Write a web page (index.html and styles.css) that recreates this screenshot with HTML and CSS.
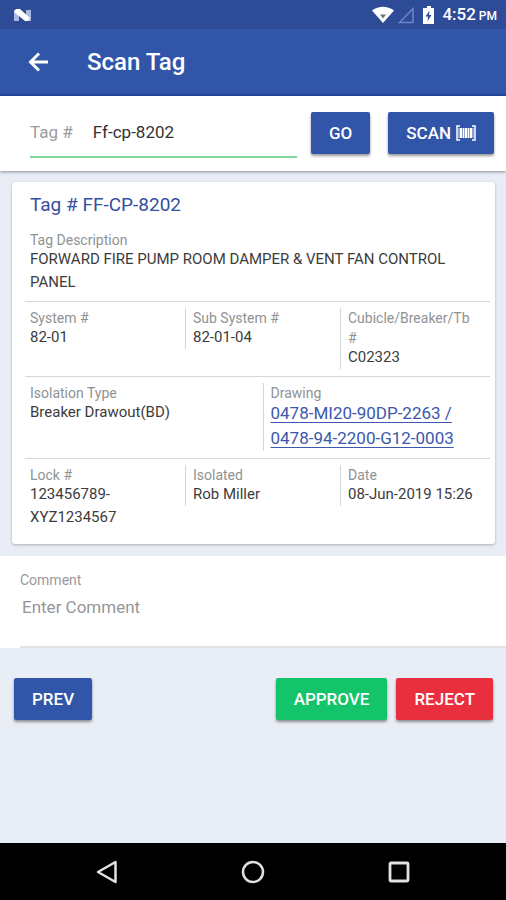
FILE: index.html
```html
<!DOCTYPE html>
<html lang="en">
<head>
<meta charset="utf-8">
<meta name="viewport" content="width=device-width, initial-scale=1">
<title>Scan Tag</title>
<link rel="stylesheet" href="styles.css">
</head>
<body>
<div class="status">
  <svg class="logo" width="20" height="16" viewBox="0 0 20 16" aria-hidden="true">
    <path d="M1 3h5v11H1zM13 3h5v11h-5z" fill="#a9b9e2"/>
    <path d="M3 2h4l10 9-2 3h-3L1 5z" fill="#fff"/>
  </svg>
  <div class="status-right">
    <svg width="62" height="20" viewBox="0 0 62 20" aria-hidden="true">
      <path d="M0 5.500Q11 -2 22 5.500L11 18Z" fill="#fff"/>
      <path d="M8 9.500h6l-3 4z" fill="#6c6f7c"/>
      <path d="M27.500 17.500h13.500v-14z" fill="none" stroke="#6c86c8" stroke-width="1.500"/>
      <path d="M55 1h4v2h3v16H51V3h4z" fill="#fff"/>
      <path d="M57.500 5.500l-4 6h2.500l-.5 4.500 4-6H57z" fill="#2d4b96"/>
    </svg>
    <span class="clock">4:52<small>PM</small></span>
  </div>
</div>
<header class="appbar">
  <button class="back" type="button" aria-label="Back">
    <svg width="22" height="20" viewBox="0 0 22 20" aria-hidden="true"><path d="M20 10H2.500M11 1.500L2.500 10l8.500 8.500" fill="none" stroke="#fff" stroke-width="3"/></svg>
  </button>
  <h1>Scan Tag</h1>
</header>
<form class="search">
  <div class="field">
    <label for="tag">Tag #</label>
    <input id="tag" type="text" value="Ff-cp-8202">
  </div>
  <button class="btn go" type="button">GO</button>
  <button class="btn" type="button">SCAN
    <svg width="20" height="16" viewBox="0 0 20 16" aria-hidden="true">
      <path d="M4 1H1v14h3M16 1h3v14h-3" fill="none" stroke="#fff" stroke-width="1.500"/>
      <path d="M4 3h2v10H4zM7 3h1v10H7zM9 3h2v10H9zM12 3h1v10h-1zM14 3h2v10h-2z" fill="#fff"/>
      <path d="M2 3h16v10H2z" fill="#fff" opacity=".45"/>
    </svg>
  </button>
</form>
<main>
  <section class="card">
    <h2>Tag # FF-CP-8202</h2>
    <div class="row first">
      <div class="cell"><div class="label">Tag Description</div><div class="value">FORWARD FIRE PUMP ROOM DAMPER &amp; VENT FAN CONTROL PANEL</div></div>
    </div>
    <div class="row">
      <div class="cells thirds">
        <div class="cell"><div class="label">System #</div><div class="value">82-01</div></div>
        <div class="cell"><div class="label">Sub System #</div><div class="value">82-01-04</div></div>
        <div class="cell"><div class="label">Cubicle/Breaker/Tb #</div><div class="value">C02323</div></div>
      </div>
    </div>
    <div class="row">
      <div class="cells halves">
        <div class="cell"><div class="label">Isolation Type</div><div class="value">Breaker Drawout(BD)</div></div>
        <div class="cell"><div class="label">Drawing</div><div class="value links"><a href="#">0478-MI20-90DP-2263 /</a><a href="#">0478-94-2200-G12-0003</a></div></div>
      </div>
    </div>
    <div class="row">
      <div class="cells thirds">
        <div class="cell"><div class="label">Lock #</div><div class="value">123456789-XYZ1234567</div></div>
        <div class="cell"><div class="label">Isolated</div><div class="value">Rob Miller</div></div>
        <div class="cell"><div class="label">Date</div><div class="value">08-Jun-2019 15:26</div></div>
      </div>
    </div>
  </section>
  <section class="comment">
    <label for="comment">Comment</label>
    <textarea id="comment" rows="2" placeholder="Enter Comment"></textarea>
  </section>
  <div class="actions">
    <button class="btn prev" type="button">PREV</button>
    <button class="btn approve" type="button">APPROVE</button>
    <button class="btn reject" type="button">REJECT</button>
  </div>
</main>
<nav class="sysnav">
  <button type="button" aria-label="Back"><svg width="24" height="24" viewBox="0 0 24 24"><path d="M20.500 2v20L3 12z" fill="none" stroke="#e2e2e2" stroke-width="2.500" stroke-linejoin="round"/></svg></button>
  <button type="button" aria-label="Home"><svg width="24" height="24" viewBox="0 0 24 24"><circle cx="12" cy="12" r="10" fill="none" stroke="#e2e2e2" stroke-width="2.500"/></svg></button>
  <button type="button" aria-label="Recent"><svg width="24" height="24" viewBox="0 0 24 24"><rect x="3" y="3" width="18" height="18" rx="1" fill="none" stroke="#e2e2e2" stroke-width="2.800"/></svg></button>
</nav>
</body>
</html>
```
FILE: styles.css
```css
* { box-sizing: border-box; }
body {
  margin: 0;
  min-height: 100vh;
  display: flex;
  flex-direction: column;
  background: #e9edf6;
  color: #3c3c3c;
  font-family: Roboto, "Liberation Sans", sans-serif;
  font-size: 15px;
}
button, input, textarea { font-family: inherit; }
button { cursor: pointer; }
.status {
  height: 29px;
  padding: 0 9px 0 13px;
  display: flex;
  align-items: center;
  justify-content: space-between;
  background: #2d4b96;
  color: #fff;
}
.status-right { display: flex; align-items: center; gap: 8px; }
.clock { display: flex; align-items: baseline; gap: 3px; font-size: 17px; font-weight: 500; line-height: 24px; }
.clock small { font-size: 12px; }
.appbar {
  height: 67px;
  padding: 0 28px;
  display: flex;
  align-items: center;
  gap: 37px;
  background: #3155a9;
  border-bottom: 2px solid #24479f;
  color: #fff;
}
.back { display: flex; padding: 0; border: 0; background: none; }
h1 { margin: 0; font-size: 24px; font-weight: 500; line-height: 28px; }
.search {
  display: flex;
  align-items: flex-start;
  padding: 16px 12px 13px 30px;
  background: #fff;
  box-shadow: 0 1px 3px #0006;
}
.field {
  flex: 1;
  min-width: 0;
  height: 46px;
  margin-right: 14px;
  display: flex;
  align-items: center;
  gap: 20px;
  padding-bottom: 4px;
  border-bottom: 2px solid #83d59b;
  font-size: 17px;
}
.field label { color: #9c9c9c; white-space: nowrap; }
.field input {
  flex: 1;
  min-width: 0;
  padding: 0;
  border: 0;
  outline: 0;
  background: none;
  color: #333;
  font-size: 17px;
}
.btn {
  height: 42px;
  padding: 0 18px;
  display: flex;
  align-items: center;
  gap: 5px;
  border: 0;
  border-radius: 2px;
  background: #3155a9;
  color: #fff;
  font-size: 17px;
  font-weight: 500;
  white-space: nowrap;
  box-shadow: 0 2px 3px #0006;
}
.go { margin-right: 18px; }
main { flex: 1; }
.card {
  margin: 11px 11px 12px 12px;
  padding: 10px 5px 8px 13px;
  border-radius: 3px;
  background: #fff;
  box-shadow: 0 1px 3px #0004;
}
h2 {
  margin: 0;
  padding-left: 5px;
  color: #3450a0;
  font-size: 19px;
  font-weight: 400;
  line-height: 26px;
}
.row { padding: 6px 0 7px 5px; border-top: 1px solid #d4d8da; }
.row.first { padding-top: 12px; border-top: 0; }
.cells { display: grid; align-items: start; margin-right: -5px; }
.thirds { grid-template-columns: repeat(3, 1fr); }
.halves { grid-template-columns: repeat(2, 1fr); }
.cell { min-width: 0; padding-right: 20px; }
.cell + .cell { padding-left: 7px; border-left: 1px solid #d4d8da; }
.label { color: #8f9294; font-size: 14px; line-height: 20px; }
.value { margin-top: -2px; line-height: 23px; }
.links { display: flex; flex-direction: column; align-items: flex-start; font-size: 17px; line-height: 25px; }
.links a { color: #3c57ac; text-underline-offset: 3px; }
.comment { padding: 14px 0 0 20px; background: #fff; }
.comment label { display: block; color: #9a9a9a; font-size: 14px; line-height: 20px; }
.comment textarea {
  display: block;
  width: 100%;
  height: 58px;
  padding: 6px 2px;
  border: 0;
  border-bottom: 2px solid #e2e3e6;
  outline: 0;
  resize: none;
  background: none;
  color: #333;
  font-size: 17px;
  line-height: 22px;
}
.comment textarea::placeholder { color: #969696; }
.actions { display: flex; gap: 9px; padding: 30px 13px 30px 14px; }
.prev { margin-right: auto; }
.approve { background: #13c46b; }
.reject { background: #e92f3d; }
.sysnav {
  height: 57px;
  padding: 0 34px;
  display: flex;
  align-items: center;
  justify-content: space-around;
  background: #000;
}
.sysnav button { display: flex; padding: 0; border: 0; background: none; }
```
